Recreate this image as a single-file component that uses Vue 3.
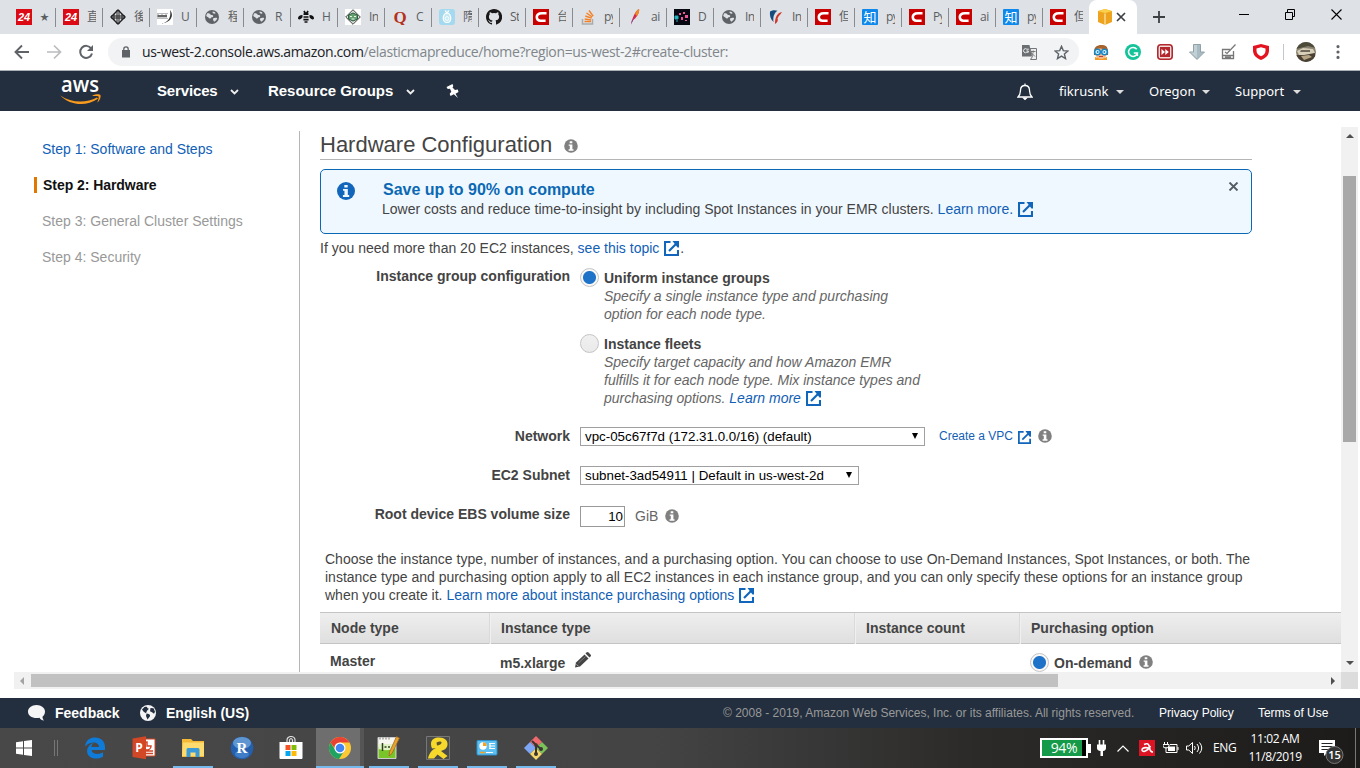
<script setup>
const csdn = '<rect width="16" height="16" fill="#c90000"/><path d="M13.500 4.300H9C5 4.300 3.800 6 3.800 8s1.200 3.700 4 3.700h4.800" fill="none" stroke="#fff" stroke-width="2.600"/>'
const globe = '<circle cx="8" cy="8" r="7" fill="#5f6368"/><path d="M3 4.500c2-.5 3 .2 3.600 1.200 1 .3 2 0 2.600 1 .3 1-.8 1.500-1.800 1.600-.5 1.500-1.700 1.400-2.400.6C4.300 8.200 3 8 2.200 7zM8.600 2.500c1.800 0 2.400.800 3 1.800-1 .8-2.600.3-3-.5zM9 9.500c1.500-1 3-.7 4.200-.6-.2 1.600-1.500 3-3 3.800-.6-1-1.500-2-1.200-3.200z" fill="#dee1e6"/>'
const red24 = '<rect width="16" height="16" fill="#dc0a14"/><text x="8" y="12" font-family="Liberation Sans" font-size="11" font-weight="bold" font-style="italic" fill="#fff" text-anchor="middle" textLength="12">24</text>'
const zhihu = '<rect width="16" height="16" rx="1" fill="#0f88eb"/><text x="8" y="12.700" font-family="Noto Sans CJK SC, sans-serif" font-size="13" fill="#fff" text-anchor="middle">知</text>'

const tabs = [
  { icon: red24, label: '★', star: true },
  { icon: red24, label: '直' },
  { icon: '<path d="M8 1l7 7-7 7-7-7z" fill="none" stroke="#222" stroke-width="1.400"/><path d="M7 1v14M9 1v14M1 7h14M1 9h14" stroke="#222" stroke-width="1"/><path d="M4 5v6M12 5v6" stroke="#222"/>', label: '後' },
  { icon: '<rect width="16" height="16" fill="#fff"/><path d="M0 4.500h11M0 9.500h11" stroke="#bbb"/><path d="M1 5.500v3M3 6v2.500M5 5.500v3M7 6v2.500M9 5.500v3M1 7h9" stroke="#333" stroke-width="1"/><path d="M13 1c4 5 2 12-9 14 7-2 10.500-6 9-14z" fill="#333"/>', label: 'U' },
  { icon: globe, label: '程' },
  { icon: globe, label: 'R' },
  { icon: '<path d="M6 2l1 2h2l1-2M5.500 5.200h5M5.500 8h5M5.400 10.600h5.200M6.500 13h3" stroke="#111" stroke-width="1.700" fill="none"/><path d="M4.500 6C1.500 6 0 7.500 0 9.300c0 2 3.500 1 4.500-1zM11.500 6c3 0 4.500 1.500 4.500 3.300 0 2-3.500 1-4.500-1z" fill="#111"/>', label: 'H' },
  { icon: '<rect width="16" height="16" fill="#fff"/><path d="M8 .7L15.300 8 8 15.300.7 8z" fill="#d4e0d7" stroke="#444"/><path d="M3.500 6L8 4l4.500 2v4L8 12l-4.500-2z" fill="#62a070" stroke="#365c43"/><path d="M5 7.500h2M9 7.500h2M6.500 10h3" stroke="#e8f4ea" stroke-width="1"/>', label: 'In' },
  { icon: '<text x="8" y="13.500" font-family="Liberation Serif" font-size="17" font-weight="bold" fill="#b5301c" text-anchor="middle">Q</text>', label: 'C' },
  { icon: '<rect width="16" height="16" rx="3" fill="#a3daf0"/><path d="M8 3.500c5 2 5 10 0 10s-5-8 0-10zM6 1.500l2 3 2-3" fill="#c4e8f5" stroke="#fff" stroke-width="1.200"/><circle cx="8" cy="9.500" r="1.800" fill="none" stroke="#fff"/>', label: '隋' },
  { icon: '<path fill="#191717" d="M8 0C3.580 0 0 3.580 0 8c0 3.540 2.290 6.530 5.470 7.590.4.070.55-.17.55-.38v-1.340c-2.230.48-2.690-1.070-2.690-1.070-.36-.93-.89-1.170-.89-1.170-.73-.5.050-.49.05-.49.81.06 1.230.83 1.230.83.72 1.230 1.880.87 2.330.66.07-.52.28-.87.51-1.070-1.780-.2-3.640-.89-3.640-3.950 0-.87.31-1.590.82-2.150-.08-.2-.36-1.020.08-2.120 0 0 .67-.21 2.200.82a7.600 7.600 0 014 0c1.530-1.040 2.200-.82 2.200-.82.44 1.100.16 1.920.08 2.120.51.56.82 1.270.82 2.150 0 3.070-1.870 3.750-3.650 3.950.29.25.54.73.54 1.480v2.200c0 .21.15.46.55.38A8 8 0 008 0z"/>', label: 'St' },
  { icon: csdn, label: '台' },
  { icon: '<path d="M2.500 10v5h10v-5" fill="none" stroke="#aaa" stroke-width="1.500"/><path d="M4.500 12.500h6.500M4.700 10l6.400.9M5.300 7l6.300 2.200M6.500 4l5.700 4M9 1.500l4.200 5.600" stroke="#f48024" stroke-width="1.400"/>', label: 'py' },
  { icon: '<path d="M4 15.500C5 10 8 2 12 0c1 3-3 10-6 11z" fill="#d22a4b"/><path d="M8 5c1-2.500 2.500-4.500 4-5 .7 2-.5 5-2 7z" fill="#f18a21"/><path d="M4 15.500l1-4 2-2z" fill="#7b3293"/>', label: 'ai' },
  { icon: '<rect width="16" height="16" fill="#080812"/><path d="M1 7h3v3H1zM2 12h2" stroke="#26a9b7" fill="#22bdcb"/><path d="M5 4h2v2H5zM9 3h2v2H9zM11 6h3v3h-3zM7 8h2v3H7zM11 11h2v1h-2z" fill="#ee589a"/>', label: 'D' },
  { icon: globe, label: 'In' },
  { icon: '<path d="M2 2.500c3-1.800 5.500-1.500 7.500-.7C5.500 4.500 5 9 5.500 13 2.500 10 1.500 6.500 2 2.500z" fill="#174a7c"/><path d="M14 3C9 4 7 8 7 15c2-1 3.500-3.500 2.500-5.500 1-3 3-3.500 4.500-6.500z" fill="#cf3529"/>', label: 'In' },
  { icon: csdn, label: '但' },
  { icon: zhihu, label: 'py' },
  { icon: csdn, label: 'Py' },
  { icon: csdn, label: 'ai' },
  { icon: zhihu, label: 'py' },
  { icon: csdn, label: '但' },
]

const extensions = [
  '<path d="M1 11C0 3 4 1 9 1c4 0 7 3 6 10z" fill="#9c5a24"/><circle cx="8" cy="9" r="6" fill="#f4b98b"/><path d="M2 6c3-2 5-2 12 0V3L9 1 3 3z" fill="#a8642a"/><circle cx="4.500" cy="8" r="2.800" fill="#e9f7ff" stroke="#1587c9" stroke-width="1.500"/><circle cx="11.500" cy="8" r="2.800" fill="#e9f7ff" stroke="#1587c9" stroke-width="1.500"/><circle cx="4.700" cy="8" r="1" fill="#1587c9"/><circle cx="11.300" cy="8" r="1" fill="#1587c9"/><path d="M6 12.500h4" stroke="#b5413a"/><path d="M2 13l6 2 6-2v3H2z" fill="#f59c27"/>',
  '<circle cx="8" cy="8" r="8" fill="#15c39a"/><path d="M11.700 5.300A4.500 4.500 0 1012.400 9H8.800M12.400 9v3" fill="none" stroke="#fff" stroke-width="1.500"/>',
  '<rect x=".8" y=".8" width="14.400" height="14.400" rx="3" fill="#f3dcdc" stroke="#b3282d" stroke-width="1.600"/><rect x="3" y="3" width="10" height="10" fill="#b3282d"/><path d="M4.500 5l3.500 3-3.500 3zM8.300 5l3.500 3-3.500 3z" fill="#fff"/>',
  '<path d="M4.500.5h7v7.500h4L8 15.500.5 8h4z" fill="#a9bcc4" stroke="#91a1a8"/><path d="M5 1h3v13L1.500 8.500H5z" fill="#c2d0d5"/>',
  '<path d="M9 5.500H1.500v6h11V7" fill="none" stroke="#777" stroke-width="1.300"/><path d="M4 8l2 1.500L14.500.5M1.500 11.500v3h11v-3M4 13h6" stroke="#777" stroke-width="1.300" fill="none"/>',
  '<path d="M8 0l8 2v4.500c0 4.500-3 7.500-8 9.500-5-2-8-5-8-9.500V2z" fill="#e3131f"/><path d="M8 3.300l4.500 1.200v2.200c0 2.500-1.500 4.200-4.500 5.600-3-1.400-4.500-3.100-4.500-5.600V4.500z" fill="#fff"/>',
]

const apps = [
  { name: 'edge', svg: '<path d="M2 10.500C3 4 7 1.500 12 1.500c6 0 10 4 10 9.500V14H8.500c.5 4.500 7.500 5 11.500 2.300v4.400C17.500 22 15 22.500 12.500 22.500 4.500 22.500 1 14 7.500 8.500 9 7.300 11 7 11 7c-1.800 1-2.500 2.500-2.700 4h7.700c0-6-9-6-14-.5z" fill="#0e7bd8"/>' },
  { name: 'powerpoint', svg: '<path d="M11 3h12v17H11z" fill="#fff" stroke="#d24726"/><path d="M15 6v4h4a4 4 0 11-4-4zM14 15h7M14 17.500h7" stroke="#d24726" stroke-width="1.500" fill="none"/><path d="M.5 2.500L14 .3v23L.5 21z" fill="#d24726"/><text x="7" y="16" font-family="Open Sans" font-weight="bold" font-size="12" fill="#fff" text-anchor="middle">P</text>' },
  { name: 'files', open: true, svg: '<path d="M1 3h9l2 2h11v16H1z" fill="#f5ba35"/><path d="M2 6.500h21V20H1z" fill="#fcdc6e"/><path d="M5.500 21v-7.500Q5.500 12 7 12h10q1.500 0 1.500 1.500V21h-4v-4.500H9.500V21z" fill="#3b9bd8"/>' },
  { name: 'rstudio', svg: '<circle cx="12" cy="12" r="11.300" fill="#2460ad"/><ellipse cx="12" cy="7" rx="9" ry="6" fill="#80b4e6" opacity=".65"/><ellipse cx="12" cy="18" rx="7" ry="4" fill="#62a4e6" opacity=".45"/><text x="12" y="17" font-family="Liberation Serif" font-size="15" font-weight="bold" fill="#fff" text-anchor="middle">R</text>' },
  { name: 'store', svg: '<path d="M8 6V4a4 3.500 0 018 0v2M10.500 6V4q1.500-3 3 0v2" fill="none" stroke="#ddd" stroke-width="1.200"/><path d="M.5 6h23v16q0 1-1 1h-21q-1 0-1-1z" fill="#fff"/><path d="M6.500 9h5v5h-5z" fill="#f35325"/><path d="M12.500 9h5v5h-5z" fill="#81bc06"/><path d="M6.500 15h5v5h-5z" fill="#05a6f0"/><path d="M12.500 15h5v5h-5z" fill="#ffba08"/>' },
  { name: 'chrome', open: true, active: true, svg: '<circle cx="12" cy="12" r="11" fill="#fcc934"/><path d="M2.500 6.500A11 11 0 0011 23l5.500-8.500H7.500z" fill="#1ea362"/><path d="M2.500 6.500A11 11 0 0121.500 6.500H12A6 6 0 006.500 12z" fill="#e94235"/><circle cx="12" cy="12" r="5.500" fill="#fff"/><circle cx="12" cy="12" r="4.300" fill="#4285f4"/>' },
  { name: 'notepad', open: true, svg: '<path d="M1 1.500h18v21H1z" fill="#f7f7ef" stroke="#ccc"/><path d="M1.500 11h17v11h-17z" fill="#79c529"/><path d="M1.500 8h17v4q-7 4-17 1z" fill="#e1f2c4"/><path d="M3 1.500v2M6 1.500v2M9 1.500v2M12 1.500v2" stroke="#777"/><path d="M5.500 7v8M7.500 11h2M11 11h2" stroke="#2b4018" stroke-width="1.500"/><path d="M19.500.5l3 1.500-7.500 15.500-3 2.500.5-4z" fill="#e7a32a" stroke="#946025" stroke-width=".7"/>' },
  { name: 'ribbon', open: true, svg: '<path d="M.5.5h23v23H.5z" fill="#4b4b49" stroke="#777"/><path d="M5 8C5 3 9 1.500 13 1.500c6 0 8.500 3 8.500 6.500 0 4-3 6-6.500 7l6.500 5-4 3-6-4.500L8 22.500H2C3 17 7 13 10 12L6 12.500C5.300 11 5 9.500 5 8z" fill="#f7d92c"/><path d="M10.500 6.500c3-1.500 5.500-1 5 .5s-2.500 2.500-4.500 2.500z" fill="#5c5331"/>' },
  { name: 'settings', open: true, svg: '<rect x="2" y="4.500" width="20" height="14.500" rx="1" fill="#5cc0f2" stroke="#2f91cb"/><circle cx="8" cy="10" r="3.700" fill="#fff"/><path d="M8 10V6.300A3.700 3.700 0 0111.700 10z" fill="#f6a21d"/><path d="M14 7.500h6M14 10h6M14 12.500h6M15 7v6" stroke="#fff" stroke-width="1.200"/><path d="M5 16.500h5" stroke="#f6a21d" stroke-width="1.500"/><path d="M11 16.500h7" stroke="#fff"/>' },
  { name: 'git', open: true, svg: '<path d="M12 0l6 6-6 6-6-6z" fill="#f0696c"/><path d="M6 6l6 6-6 6-6-6z" fill="#7da7f5"/><path d="M18 6l6 6-6 6-6-6z" fill="#7cc25a"/><path d="M12 12l6 6-6 6-6-6z" fill="#f7d66a"/><path d="M8 5l4 4v9M12 9l5 4" fill="none" stroke="#3b3532" stroke-width="2"/><circle cx="12" cy="9" r="1.800" fill="#3b3532"/><circle cx="12" cy="18" r="2" fill="#3b3532"/><circle cx="17" cy="13" r="2" fill="#3b3532"/>' },
]

const framePath = 'M6.500 1H1v13h13V9'
const arrowPath = 'M5 10l7-7'
const headPath = 'M8.500 0H15v6.500h-1.500z'
const infoPath = 'M5.700 2.300h2.600v2H5.700zM4.700 5.400h3.700v4.800h1.100v1.500H4.600v-1.500h1.200V6.800H4.700z'
</script>

<template>
  <div class="screen">
    <header class="tabstrip">
      <div v-for="(t, i) in tabs" :key="i" class="tab" :class="{ last: i === tabs.length - 1 }">
        <svg class="fav" viewBox="0 0 16 16" v-html="t.icon"></svg>
        <span class="tab-label" :class="{ star: t.star }">{{ t.label }}</span>
      </div>
      <div class="tab-active">
        <svg width="14" height="16" viewBox="0 0 14 16"><path d="M7 0l7 2v11l-7 3-7-3V2z" fill="#eda31e" /><path d="M0 2.200L7 4l7-1.800L7 0z" fill="#fbd04a" /><path d="M7 4.500V16" stroke="#fbe2a0" stroke-width="1.300" /></svg>
        <svg width="10" height="10" viewBox="0 0 10 10"><path d="M1 1l8 8M9 1L1 9" stroke="#3c4043" stroke-width="1.700" /></svg>
      </div>
      <svg class="plus" width="12" height="12" viewBox="0 0 12 12"><path d="M6 0v12M0 6h12" stroke="#3c4043" stroke-width="1.800" /></svg>
      <div class="win">
        <svg width="10" height="11" viewBox="0 0 10 11"><path d="M0 5.500h10" stroke="#000" /></svg>
        <svg width="10" height="11" viewBox="0 0 10 11"><path d="M.5 3.500h7v7h-7zM2.500 3V.5h7v7H8" fill="none" stroke="#000" /></svg>
        <svg width="11" height="11" viewBox="0 0 11 11"><path d="M.5.5l10 10M10.500.5l-10 10" stroke="#000" stroke-width="1.100" /></svg>
      </div>
    </header>

    <div class="toolbar">
      <svg class="navicon" viewBox="0 0 16 16"><path d="M15 8H2M8 1.500L1.500 8 8 14.500" fill="none" stroke="#5f6368" stroke-width="1.900" /></svg>
      <svg class="navicon" viewBox="0 0 16 16"><path d="M1 8h13M8 1.500L14.500 8 8 14.500" fill="none" stroke="#babcbe" stroke-width="1.700" /></svg>
      <svg class="navicon" viewBox="0 0 16 16"><path d="M13.200 4.500A6 6 0 1014 9.500" fill="none" stroke="#5f6368" stroke-width="2" /><path d="M15 1v6H9z" fill="#5f6368" /></svg>
      <div class="omnibox">
        <svg width="8" height="12" viewBox="0 0 8 12"><path d="M0 4h8v7.500H0z" fill="#5f6368" /><path d="M1.800 4.500V3a2.200 2.200 0 014.400 0v1.500" fill="none" stroke="#5f6368" stroke-width="1.300" /></svg>
        <span class="url"><b>us-west-2.console.aws.amazon.com</b>/elasticmapreduce/home?region=us-west-2#create-cluster:</span>
        <svg class="translate" width="15" height="15" viewBox="0 0 15 15"><path d="M0 0h7.500l2.500 11.500H0z" fill="#6b6f73" /><path d="M8 3.500h6.500v11H8.500l2-3z" fill="#eee" stroke="#73777b" /><path d="M6.800 4.200H4.800a2 2 0 100 3h1.500V6H4.500" fill="none" stroke="#eee" /><path d="M9 6.500h4.500M11.200 5.500v1c0 1.500-.8 3-1.700 4M10 8.500l3 3" stroke="#777" fill="none" /></svg>
        <svg width="15" height="15" viewBox="0 0 15 15"><path d="M7.500 1.300l1.800 4.300 4.600.4-3.500 3 1.100 4.600-4-2.500-4 2.500 1.100-4.600-3.500-3 4.600-.4z" fill="none" stroke="#5f6368" stroke-width="1.400" /></svg>
      </div>
      <div class="exts">
        <svg v-for="(e, i) in extensions" :key="i" width="16" height="16" viewBox="0 0 16 16" v-html="e"></svg>
      </div>
      <i class="tb-div"></i>
      <svg class="avatar" width="20" height="20" viewBox="0 0 20 20"><clipPath id="av"><circle cx="10" cy="10" r="10" /></clipPath><g clip-path="url(#av)"><path d="M0 0h20v20H0z" fill="#8a8270" /><path d="M0 0h20v6L12 4 0 7z" fill="#4c4a38" /><path d="M1 9l6-3 10 1 2 4-5 2H3z" fill="#d8cfb9" /><path d="M5 8h9v2H4z" fill="#6e675a" /><path d="M0 13h8l11-2v9H3z" fill="#4a4134" /><path d="M5 14l8-1 3 2-8 3z" fill="#b5a585" /></g></svg>
      <svg width="4" height="14" viewBox="0 0 4 14"><path d="M2 0a1.600 1.600 0 010 3.200A1.600 1.600 0 012 0zm0 5.400a1.600 1.600 0 010 3.200 1.600 1.600 0 010-3.200zm0 5.400a1.600 1.600 0 010 3.200 1.600 1.600 0 010-3.200z" fill="#5f6368" /></svg>
    </div>

    <nav class="aws">
      <svg class="logo" width="42" height="28" viewBox="0 0 42 28"><text x="1" y="14" font-family="Open Sans" font-weight="600" font-size="22" fill="#fff" textLength="38" lengthAdjust="spacingAndGlyphs">aws</text><path d="M.3 17.500C11 25 26 25.500 37 19.500l1 1.300C26 29 10 27.500 .3 17.500z" fill="#f79a1e" /><path d="M32.500 17.600c3-1.700 7-1.800 8-.6.6 2-.7 5.800-3.300 7.800 1-2.800 2-5.300 1.300-6.200-.7-.8-3.500-.8-6-.5z" fill="#f79a1e" /></svg>
      <span class="nav-b services">Services</span>
      <svg class="chev" width="9" height="6" viewBox="0 0 9 6"><path d="M1 1l3.500 3.500L8 1" fill="none" stroke="#eee" stroke-width="1.800" /></svg>
      <span class="nav-b groups">Resource Groups</span>
      <svg class="chev" width="9" height="6" viewBox="0 0 9 6"><path d="M1 1l3.500 3.500L8 1" fill="none" stroke="#eee" stroke-width="1.800" /></svg>
      <svg class="pin" width="13" height="14" viewBox="0 0 13 14"><path d="M.5 3L6.500 0l.8 2-.8 1.500L9 6l2.800-.5L12.500 8l-3 1.700L12 14l-4.200-3.700L4.500 12l-.8-2.200 1.600-2L4 4.700l-2.300.3z" fill="#fff" /></svg>
      <svg class="bell" width="16" height="18" viewBox="0 0 16 18"><path d="M1 14c2.500-2 2.300-4 2.500-7C3.700 3.700 5.500 2.500 8 2.500S12.300 3.700 12.500 7c.2 3 0 5 2.500 7z" fill="none" stroke="#fff" stroke-width="1.300" /><path d="M8 .5v2M6.500 15h3L8 16.500z" fill="#fff" stroke="#fff" stroke-width="1.200" /></svg>
      <span class="nav-s user">fikrusnk</span><i class="caret"></i>
      <span class="nav-s region">Oregon</span><i class="caret"></i>
      <span class="nav-s support">Support</span><i class="caret"></i>
    </nav>

    <section class="body">
      <div class="pane">
        <aside class="steps">
          <a class="step link">Step 1: Software and Steps</a>
          <a class="step current">Step 2: Hardware</a>
          <a class="step">Step 3: General Cluster Settings</a>
          <a class="step">Step 4: Security</a>
        </aside>
        <main class="main">
          <h1>Hardware Configuration<svg class="info" width="14" height="14" viewBox="0 0 14 14"><circle cx="7" cy="7" r="6.800" fill="#808080" /><path :d="infoPath" fill="#fff" /></svg></h1>
          <div class="alert">
            <svg class="alert-i" width="18" height="18" viewBox="0 0 14 14"><circle cx="7" cy="7" r="7" fill="#1166bb" /><path :d="infoPath" fill="#f0f8ff" /></svg>
            <div class="alert-text">
              <strong>Save up to 90% on compute</strong>
              <p>Lower costs and reduce time-to-insight by including Spot Instances in your EMR clusters. <a>Learn more.</a><svg class="ext" viewBox="0 0 15 15"><path :d="framePath" /><path :d="arrowPath" /><path class="solid" :d="headPath" /></svg></p>
            </div>
            <svg class="dismiss" width="11" height="9" viewBox="0 0 11 9"><path d="M1.500.5l8 8M9.500.5l-8 8" stroke="#545b64" stroke-width="1.900" /></svg>
          </div>
          <p class="need">If you need more than 20 EC2 instances, <a>see this topic</a><svg class="ext" viewBox="0 0 15 15"><path :d="framePath" /><path :d="arrowPath" /><path class="solid" :d="headPath" /></svg><span class="dot">.</span></p>

          <div class="form">
            <div class="row r1">
              <label>Instance group configuration</label>
              <div class="opts">
                <div class="opt">
                  <i class="radio on"></i>
                  <div><b>Uniform instance groups</b><p>Specify a single instance type and purchasing<br>option for each node type.</p></div>
                </div>
                <div class="opt">
                  <i class="radio"></i>
                  <div><b>Instance fleets</b><p>Specify target capacity and how Amazon EMR<br>fulfills it for each node type. Mix instance types and<br>purchasing options. <a>Learn more</a><svg class="ext" viewBox="0 0 15 15"><path :d="framePath" /><path :d="arrowPath" /><path class="solid" :d="headPath" /></svg></p></div>
                </div>
              </div>
            </div>
            <div class="row r2">
              <label>Network</label>
              <div class="select wide"><span>vpc-05c67f7d (172.31.0.0/16) (default)</span><i></i></div>
              <a class="vpc">Create a VPC</a>
              <svg class="ext small" viewBox="0 0 15 15"><path :d="framePath" /><path :d="arrowPath" /><path class="solid" :d="headPath" /></svg>
              <svg class="info vi" width="14" height="14" viewBox="0 0 14 14"><circle cx="7" cy="7" r="6.800" fill="#808080" /><path :d="infoPath" fill="#fff" /></svg>
            </div>
            <div class="row r2">
              <label>EC2 Subnet</label>
              <div class="select"><span>subnet-3ad54911 | Default in us-west-2d</span><i></i></div>
            </div>
            <div class="row r3">
              <label>Root device EBS volume size</label>
              <div class="number">10</div>
              <span class="gib">GiB</span>
              <svg class="info gi" width="14" height="14" viewBox="0 0 14 14"><circle cx="7" cy="7" r="6.800" fill="#808080" /><path :d="infoPath" fill="#fff" /></svg>
            </div>
          </div>

          <p class="choose">Choose the instance type, number of instances, and a purchasing option. You can choose to use On-Demand Instances, Spot Instances, or both. The<br>instance type and purchasing option apply to all EC2 instances in each instance group, and you can only specify these options for an instance group<br>when you create it. <a>Learn more about instance purchasing options</a><svg class="ext" viewBox="0 0 15 15"><path :d="framePath" /><path :d="arrowPath" /><path class="solid" :d="headPath" /></svg></p>

          <div class="grid head"><span>Node type</span><span>Instance type</span><span>Instance count</span><span>Purchasing option</span></div>
          <div class="grid line">
            <span class="master">Master</span>
            <span class="type">m5.xlarge<svg width="16" height="16" viewBox="0 0 16 16"><path d="M0 15.500l1-5L9.500 2.500l4 4L5 14.500z" fill="#444" /><path d="M10.500 1.500l1-1q1-1 2 0l2 2q1 1 0 2l-1 1z" fill="#444" /><path d="M3.500 11L10.500 4.500" stroke="#888" stroke-width=".8" /><path d="M1.500 12.300l2 2" stroke="#ddd" stroke-width=".7" /></svg></span>
            <span></span>
            <span class="demand"><i class="radio on"></i>On-demand<svg class="info" width="14" height="14" viewBox="0 0 14 14"><circle cx="7" cy="7" r="6.800" fill="#808080" /><path :d="infoPath" fill="#fff" /></svg></span>
          </div>
        </main>
        <div class="vscroll"><i class="up"></i><div class="vthumb"></div><i class="down"></i></div>
      </div>
      <div class="hscroll"><div class="htrack"><i class="left"></i><div class="hthumb"></div><i class="right"></i></div><div class="corner"></div></div>
    </section>

    <footer class="foot">
      <svg class="bubble" width="18" height="16" viewBox="0 0 18 16"><path d="M8.500 0C13.500 0 17 3 17 6.500c0 2.500-1 4-2.500 5.300 0 1.500.5 2.700 1.500 3.700-2 0-3.500-1-4.500-2.700C4.500 13.800 0 11 0 6.500 0 3 3.500 0 8.500 0z" fill="#f5f5f5" /></svg>
      <b class="fb">Feedback</b>
      <svg class="globe" width="16" height="16" viewBox="0 0 16 16"><circle cx="8" cy="8" r="8" fill="#f5f5f5" /><path d="M4.500 2c2-.7 3 0 3 1.300l1.500.5-2 2-1 2.500-2.300-1.500L2 4.500zM6.500 8.500c2 0 4 1 3.500 2.700L7.500 14.500 6 11zM10.500 3l3 .3 1.500 3.500-1 2-2-1.500-2-1z" fill="#232f3e" /></svg>
      <b>English (US)</b>
      <span class="copy">© 2008 - 2019, Amazon Web Services, Inc. or its affiliates. All rights reserved.</span>
      <span class="pp">Privacy Policy</span>
      <span class="tou">Terms of Use</span>
    </footer>

    <div class="taskbar">
      <svg class="winlogo" width="16" height="16" viewBox="0 0 16 16"><path d="M0 2.200L7 1.200v6.300H0zM8 1l8-1v7.500H8zM0 8.500h7v6.300l-7-1zM8 8.500h8V16l-8-1z" fill="#fff" /></svg>
      <i class="bars"></i>
      <div class="apps">
        <div v-for="a in apps" :key="a.name" class="app" :class="{ open: a.open, active: a.active }"><svg width="24" height="24" viewBox="0 0 24 24" v-html="a.svg"></svg></div>
      </div>
      <div class="tray">
        <div class="battery"><span>94%</span></div><i class="nub"></i>
        <svg class="plug" width="9" height="16" viewBox="0 0 9 16"><path d="M2.500 0v5M6.500 0v5" stroke="#fff" stroke-width="1.600" /><path d="M0 4.500h9V8q0 2.500-3 3v5H3.500v-5Q0 10.500 0 8z" fill="#fff" /></svg>
        <svg class="up-chev" width="12" height="7" viewBox="0 0 12 7"><path d="M.5 6.500L6 1l5.500 5.500" fill="none" stroke="#fff" stroke-width="1.200" /></svg>
        <svg class="avira" width="16" height="16" viewBox="0 0 16 16"><path d="M0 0h16v16H0z" fill="#dc1424" /><path d="M5 4.500q4-2 5 1l1 4q.7 2.500 3 2.500M9.500 8C6 7 3 8 3 10s4.500 2.500 8.500-4" fill="none" stroke="#fff" stroke-width="1.600" /></svg>
        <svg class="charge" width="16" height="14" viewBox="0 0 16 14"><path d="M1.500 1v2M4.500 1v2M0 3.500h6V5Q6 7 3 7T0 5zM3 6v5.500h11v-8H7M15 6v3" fill="none" stroke="#fff" /><path d="M5 5.500h7V10H5z" fill="#fff" /></svg>
        <svg class="vol" width="17" height="14" viewBox="0 0 17 14"><path d="M.5 5v4h2.300l3.700 3.500v-11L2.800 5zM8.500 5q1.500 2 0 4M11 3q3.200 4 0 8M13.500 1.500q4.500 5.500 0 11" fill="none" stroke="#fff" /></svg>
        <span class="eng">ENG</span>
        <div class="clock"><span>11:02 AM</span><span>11/8/2019</span></div>
        <div class="notes"><svg width="26" height="25" viewBox="0 0 26 25"><path d="M0 1h16v13H8l-3 3v-3H0z" fill="#fff" /><path d="M2.500 4.500h11M2.500 7.500h11M2.500 10.500h8" stroke="#242424" /><circle cx="15.500" cy="16" r="8.500" fill="#333" stroke="#777" /><text x="15.500" y="20" font-family="Open Sans" font-weight="600" font-size="11" fill="#fff" text-anchor="middle">15</text></svg></div>
        <i class="peek"></i>
      </div>
    </div>
  </div>
</template>

<style>
html, body { margin: 0; overflow: hidden; }
</style>

<style scoped>
* { box-sizing: border-box; }
svg { display: block; flex: none; }
p, h1 { margin: 0; font-weight: normal; }
.screen { width: 1360px; height: 768px; display: flex; flex-direction: column; background: #fff; overflow: hidden; font: 14px/18px "Liberation Sans", Arial, "Noto Sans CJK SC", sans-serif; color: #444; }
.screen > * { flex: none; }

.tabstrip { height: 34px; background: #dee1e6; display: flex; padding-left: 9px; }
.tab { width: 47px; flex: none; display: flex; align-items: center; padding: 0 0 0 7px; height: 34px; background: linear-gradient(#888c91, #888c91) right 8px / 1px 19px no-repeat; }
.tab.last { background: none; }
.fav { width: 16px; height: 16px; }
.tab-label { margin-left: 8px; width: 9px; overflow: hidden; white-space: nowrap; font: 12px/18px "Open Sans", "Noto Sans CJK TC", sans-serif; color: #5b5e62; letter-spacing: -.5px; }
.tab-label.star { font-size: 9px; }
.tab-active { width: 48px; margin-left: -1px; background: #fff; border-radius: 8px 8px 0 0; display: flex; align-items: center; padding-left: 9px; gap: 4px; }
.plus { margin: 11px 0 0 16px; }
.win { margin: 9px 18px 0 auto; display: flex; gap: 36px; }

.toolbar { height: 37px; border-bottom: 1px solid #aab0b4; background: #fff; display: flex; align-items: center; padding-left: 14px; }
.navicon { width: 16px; height: 16px; margin-right: 16px; }
.omnibox { margin-left: -2px; width: 971px; height: 28px; border-radius: 14px; background: #f1f3f4; display: flex; align-items: center; padding-left: 14px; }
.url { margin-left: 12px; font: 14px/20px "Open Sans", "Noto Sans", sans-serif; color: #80868b; white-space: nowrap; letter-spacing: -0.36px; }
.url b { font-weight: normal; color: #202124; }
.translate { margin-left: auto; margin-right: 17px; }
.omnibox > svg:last-child { margin-right: 10px; }
.exts { display: flex; gap: 16px; margin-left: 14px; }
.tb-div { width: 1px; height: 16px; background: #c4c7ca; margin-left: 14px; }
.avatar { margin: 0 20px 0 12px; }

.aws { height: 40px; background: #232f3e; display: flex; align-items: center; color: #fff; padding-left: 60px; white-space: nowrap; }
.logo { margin-top: 1px; }
.nav-b { font-weight: bold; font-size: 15px; }
.services { width: 61px; margin-left: 55px; letter-spacing: -.15px; }
.groups { width: 126px; margin-left: 29px; letter-spacing: -.04px; }
.chev { margin: 2px 0 0 12px; }
.pin { margin-left: 31px; }
.bell { margin: 2px 0 0 auto; }
.nav-s { font: 13px/18px "Noto Sans", sans-serif; }
.user { width: 48px; margin-left: 26px; }
.region { width: 44px; margin-left: 25px; }
.support { width: 49px; margin-left: 25px; }
.caret { border: 4px solid transparent; border-top-color: #ddd; border-bottom: 0; margin: 1px 0 0 9px; }
.caret:last-child { margin-right: 59px; }

.body { height: 587px; padding-left: 14px; overflow: hidden; display: flex; flex-direction: column; }
.pane { height: 561px; display: flex; align-items: flex-start; overflow: hidden; }
.steps { width: 286px; height: 541px; margin-top: 20px; border-right: 1px solid #b5b5b5; padding: 9px 0 0 20px; display: flex; flex-direction: column; gap: 18px; }
.step { display: block; height: 18px; padding-left: 8px; color: #999; }
.step.link, a { color: #1160b6; }
.step.current { font-weight: bold; padding-left: 6px; border-left: 3px solid #e07700; height: 16px; line-height: 16px; margin: 1px 0; letter-spacing: -.05px; }
.steps .step:not(.link) { color: #999; }
.steps .step.current { color: #111; }

.main { width: 1021px; margin-left: 20px; padding-top: 16px; height: 561px; overflow: hidden; white-space: nowrap; }
h1 { width: 932px; height: 33px; border-bottom: 1px solid #b5b5b5; font-size: 22px; line-height: 35px; display: flex; }
h1 .info { margin: 12px 0 0 12px; }
.alert { width: 932px; height: 65px; margin-top: 9px; border: 1px solid #0a68b4; border-radius: 5px; background: #f0f8ff; display: flex; }
.alert-i { margin: 12px 0 0 16px; }
.alert-text { margin: 9px 0 0 27px; }
.alert-text strong { display: block; font-size: 16px; line-height: 22px; color: #0a68b4; padding-left: 1px; letter-spacing: -.03px; }
.alert-text p { margin-top: -1px; }
.dismiss { margin: 12px 12px 0 auto; }
.ext { display: inline-block; width: 15px; height: 15px; margin-left: 5px; vertical-align: -3px; fill: none; stroke: #1166bb; stroke-width: 2.100; }
.ext .solid { fill: #1166bb; stroke: none; }
.need { margin-top: 5px; height: 18px; }
.dot { margin-left: 1px; }
.form { margin-top: 10px; }
.row { display: flex; align-items: flex-start; }
.row label { width: 250px; margin-right: 10px; text-align: right; font-weight: bold; }
.r1 { height: 160px; }
.opts { padding-top: 2px; }
.opt { display: flex; height: 66px; }
.opt b { display: block; }
.opt p { font-style: italic; color: #666; }
.radio { flex: none; width: 19px; height: 19px; border-radius: 50%; border: 1px solid #c4c4c4; background: linear-gradient(#f0f0f0, #eaeaea); margin: -1px 5px 0 0; }
.radio.on { background: radial-gradient(circle, #1e72c8 6px, #f8f8f8 7px); }
.r2 { height: 39px; }
.r2 label { line-height: 18px; }
.select { width: 279px; height: 19px; border: 1px solid #a0a0a0; background: #fff; color: #000; font-size: 13.333px; line-height: 17px; display: flex; align-items: center; justify-content: space-between; padding: 0 6px 0 4px; }
.select.wide { width: 345px; }
.select i { border: 3.500px solid transparent; border-top: 6px solid #000; border-bottom: 0; margin-top: -2px; }
.vpc { font-size: 12px; margin-left: 14px; line-height: 19px; }
.ext.small { width: 13px; height: 13px; margin: 4px 0 0 5px; }
.vi { margin: 2px 0 0 7px; }
.r3 { height: 45px; }
.number { width: 45px; height: 21px; margin-top: 1px; border: 1px solid #999; color: #000; text-align: right; font-size: 13.333px; line-height: 20px; padding-right: 1px; }
.gib { margin: 2px 0 0 10px; color: #666; }
.gi { margin: 4px 0 0 7px; }
.choose { padding-left: 5px; height: 62px; }
.grid { display: grid; grid-template-columns: 170px 365px 165px 1fr; }
.head { height: 32px; border-top: 1px solid #c4c4c4; border-bottom: 1px solid #c4c4c4; background: linear-gradient(#eee, #dfdfdf); font-weight: bold; }
.head span { padding-left: 11px; line-height: 31px; }
.head span + span { border-left: 1px solid #f0f0f0; box-shadow: -1px 0 #dadada; padding-left: 10px; }
.line { font-weight: bold; height: 28px; }
.master { padding: 8px 0 0 10px; }
.type { display: flex; padding: 10px 0 0 10px; }
.type svg { margin: -2px 0 0 10px; }
.demand { display: flex; padding: 10px 0 0 10px; }
.demand .info { margin: 1px 0 0 7px; }

.vscroll { width: 17px; height: 545px; margin-top: 16px; background: #f1f1f1; display: flex; flex-direction: column; align-items: center; }
.up { border: 4px solid transparent; border-bottom-color: #505050; border-top: 0; margin-top: 7px; }
.vthumb { width: 13px; height: 266px; background: #a8a8a8; margin-top: 38px; }
.down { border: 4px solid transparent; border-top-color: #505050; border-bottom: 0; margin: auto 0 7px; }
.hscroll { display: flex; height: 17px; }
.htrack { width: 1327px; background: #f1f1f1; display: flex; align-items: center; }
.left { border: 4px solid transparent; border-right-color: #a3a3a3; border-left: 0; margin-left: 6px; }
.hthumb { width: 1027px; height: 13px; background: #c1c1c1; margin-left: 7px; }
.right { border: 4px solid transparent; border-left-color: #505050; border-right: 0; margin: 0 6px 0 auto; }
.corner { width: 17px; background: #dcdcdc; }

.foot { height: 30px; background: #232f3e; color: #fff; display: flex; align-items: center; padding-left: 28px; white-space: nowrap; }
.fb { margin-left: 9px; width: 65px; }
.globe { margin: 0 10px 0 20px; }
.foot span { font-size: 12px; }
.foot .copy { margin-left: auto; color: #999; width: 411px; }
.pp { margin-left: 25px; width: 74px; }
.foot .tou { margin: 0 32px 0 25px; width: 70px; letter-spacing: -.03px; }

.taskbar { height: 40px; background: linear-gradient(90deg, #484848, #444 48%, #2b2a29 72%, #1c1b19); display: flex; align-items: center; color: #fff; }
.winlogo { margin-left: 16px; }
.bars { width: 4px; height: 16px; border: 1px solid #777; border-width: 0 1px; margin-left: 22px; }
.apps { display: flex; margin-left: 12px; height: 40px; }
.app { width: 49px; height: 40px; display: flex; align-items: center; justify-content: center; }
.app.open { background: linear-gradient(#76b9ed, #76b9ed) 5px bottom / 40px 2px no-repeat; }
.app.active { background: linear-gradient(#76b9ed, #76b9ed) 1px bottom / 48px 2px no-repeat, linear-gradient(90deg, transparent 1px, #6e6e6e 1px 45px, #555 45px); }
.tray { margin-left: auto; display: flex; align-items: center; height: 40px; font-family: "Open Sans", "Noto Sans", sans-serif; font-size: 12px; }
.battery { width: 48px; height: 20px; border: 2px solid #fff; background: linear-gradient(90deg, #149a48 40px, #000 40px); text-align: center; font-size: 14px; line-height: 16px; letter-spacing: -.3px; }
.nub { width: 3px; height: 9px; background: #fff; }
.plug { margin-left: 6px; }
.up-chev { margin-left: 11px; }
.avira { margin-left: 10px; }
.charge { margin-left: 8px; }
.vol { margin-left: 7px; }
.eng { margin-left: 10px; width: 23px; letter-spacing: -.3px; }
.clock { width: 54px; margin-left: 12px; text-align: center; display: flex; flex-direction: column; white-space: nowrap; letter-spacing: -.4px; align-items: center; }
.notes { margin: 6px 0 0 17px; }
.peek { width: 1px; height: 40px; background: #777; margin: 0 4px 0 10px; }
</style>
